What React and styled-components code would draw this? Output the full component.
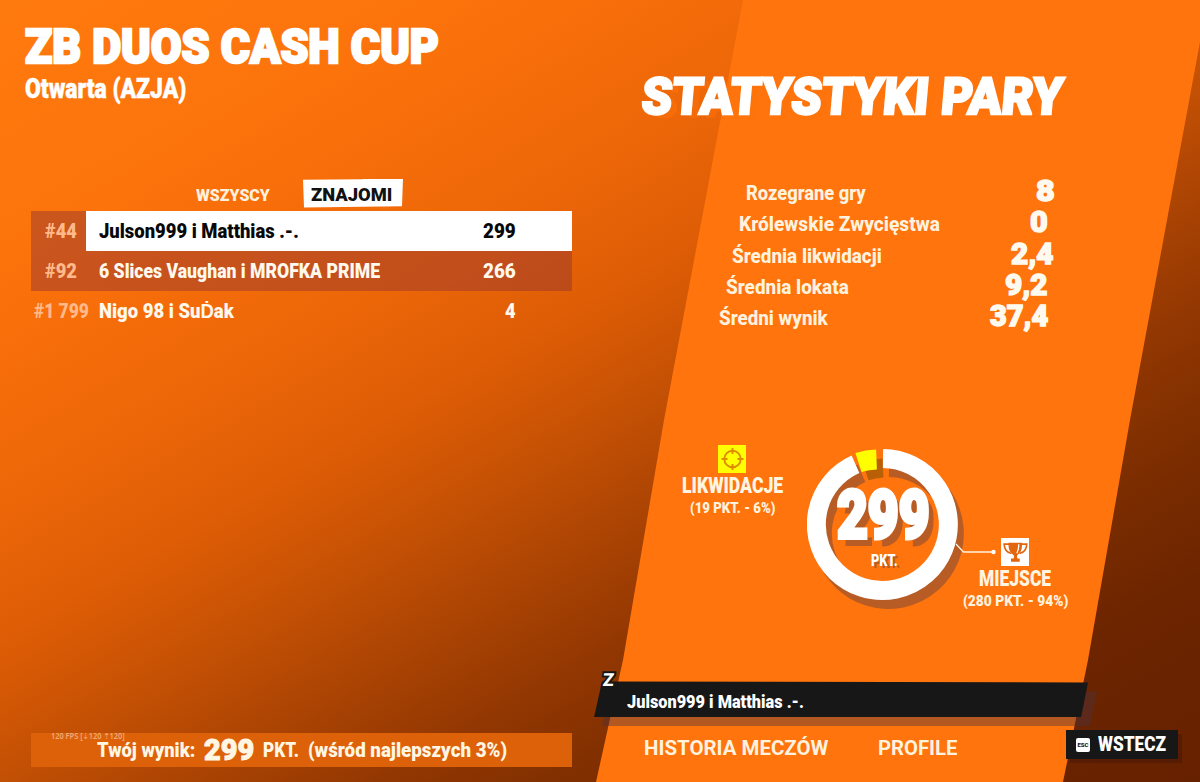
import React, { useLayoutEffect, useRef, useState } from "react";
import styled, { createGlobalStyle } from "styled-components";

const stats = [
  { label: "Rozegrane gry", value: "8", width: 120, valueWidth: 19, end: 145 },
  { label: "Królewskie Zwycięstwa", value: "0", width: 201, valueWidth: 18, end: 152 },
  { label: "Średnia likwidacji", value: "2,4", width: 150, valueWidth: 42, end: 147 },
  { label: "Średnia lokata", value: "9,2", width: 123, valueWidth: 42, end: 153 },
  { label: "Średni wynik", value: "37,4", width: 109, valueWidth: 58, end: 152 },
];

const rows = [
  { rank: "#44", rankWidth: 32, name: "Julson999 i Matthias .-.", width: 200, points: "299", pointsWidth: 33, active: true },
  { rank: "#92", rankWidth: 32, name: "6 Slices Vaughan i MROFKA PRIME", width: 281, points: "266", pointsWidth: 33, shaded: true },
  { rank: "#1 799", rankWidth: 55, name: "Nigo 98 i SuḊak", width: 135, points: "4", pointsWidth: 11 },
];

// squeezes a line of text so that it fills the given width
const Fit = ({ width, children, ...rest }) => {
  const ref = useRef(null);
  const [scale, setScale] = useState(1);

  useLayoutEffect(() => {
    setScale(width / ref.current.offsetWidth);
  }, [width, children]);

  return (
    <FitBox $width={width} {...rest}>
      <FitText ref={ref} style={{ transform: `scaleX(${scale})` }}>
        {children}
      </FitText>
    </FitBox>
  );
};

const App = () => {
  return (
    <>
      <GlobalStyle />
      <Screen>
        <Leaderboard>
          <Title width={414}>ZB DUOS CASH CUP</Title>
          <Region width={161}>Otwarta (AZJA)</Region>
          <Tabs>
            <Tab>
              <Fit width={74}>WSZYSCY</Fit>
            </Tab>
            <Tab $active>
              <Fit width={81}>ZNAJOMI</Fit>
            </Tab>
          </Tabs>
          {rows.map((row) => (
            <Row key={row.rank} $shaded={row.shaded}>
              <Rank $filled={row.active} $wide={row.rankWidth > 40}>
                <Fit width={row.rankWidth}>{row.rank}</Fit>
              </Rank>
              <Entry $active={row.active}>
                <Fit width={row.width}>{row.name}</Fit>
                <Fit width={row.pointsWidth}>{row.points}</Fit>
              </Entry>
            </Row>
          ))}
          <Score>
            <Fps width={74}>120 FPS [⇣120 ⇡120]</Fps>
            <Fit width={98}>Twój wynik:</Fit>
            <ScoreValue width={50}>299</ScoreValue>
            <Fit width={36}>PKT.</Fit>
            <Fit width={199}>(wśród najlepszych 3%)</Fit>
          </Score>
        </Leaderboard>

        <Panel>
          <PanelTitle width={421}>STATYSTYKI PARY</PanelTitle>
          <StatList>
            {stats.map((stat, i) => (
              <Stat key={stat.label} $index={i} $end={stat.end}>
                <Fit width={stat.width}>{stat.label}</Fit>
                <StatValue width={stat.valueWidth}>{stat.value}</StatValue>
              </Stat>
            ))}
          </StatList>

          <Summary>
            <Category>
              <Badge $color="#ffff00">
                <Crosshair />
              </Badge>
              <CategoryName width={101}>LIKWIDACJE</CategoryName>
              <CategoryInfo width={85}>(19 PKT. - 6%)</CategoryInfo>
            </Category>
            <Ring>
              <RingChart />
              <Total width={93}>299</Total>
              <Unit width={27}>PKT.</Unit>
            </Ring>
            <Category $low>
              <Badge $color="#fff">
                <Trophy />
              </Badge>
              <CategoryName width={72}>MIEJSCE</CategoryName>
              <CategoryInfo width={105}>(280 PKT. - 94%)</CategoryInfo>
            </Category>
          </Summary>

          <PlayerBar>
            <KeyHint>Z</KeyHint>
            <PlayerShadow />
            <PlayerShape />
            <PlayerName width={177}>Julson999 i Matthias .-.</PlayerName>
          </PlayerBar>
          <Footer>
            <Fit width={184}>HISTORIA MECZÓW</Fit>
            <Fit width={79}>PROFILE</Fit>
            <Back>
              <Esc>ESC</Esc>
              <Fit width={68}>WSTECZ</Fit>
            </Back>
          </Footer>
        </Panel>
      </Screen>
    </>
  );
};

const Crosshair = () => (
  <svg width="28" height="28" viewBox="0 0 28 28" fill="none" stroke="#e08a00" strokeWidth="1.9">
    <circle cx="14.5" cy="14" r="8.2" />
    <path d="M14.5 3v6M14.5 19v6M3.5 14h6M19.5 14h6" />
  </svg>
);

const Trophy = () => (
  <svg width="28" height="28" viewBox="0 0 28 28">
    <path
      d="M7.5 4.8h13.500v2.400c-.1 4.900-1.700 8.200-4.700 10-.5.800-.3 2.400.2 3.300h2.200v3.300H10v-3.300h2.600c.5-.9.600-2.500.1-3.300C9.600 15.400 7.600 12.100 7.500 7.200z"
      fill="#e2650f"
    />
    <path
      d="M8.300 6.100H3.100c.2 4.400 2.400 8.200 7.200 9.400M20.600 6.100h5.200c-.2 4.400-2.400 8.200-7.200 9.400"
      fill="none"
      stroke="#e2650f"
      strokeWidth="1.6"
    />
    <path d="M17.800 6.200c0 3.800-.5 6.500-1.900 9" fill="none" stroke="#fff" strokeWidth="1.3" />
  </svg>
);

const RingChart = () => (
  <RingSvg width="192" height="164" viewBox="0 0 192 164">
    <g transform="translate(6 9)" fill="none" strokeWidth="19">
      <path d="M76 13.500A66 66 0 1 1 48.500 19.200" stroke="#b85c25" />
      <path d="M52.500 17.300A66 66 0 0 1 70 14" stroke="#b85f08" />
    </g>
    <g fill="none" strokeWidth="19">
      <path d="M76 13.500A66 66 0 1 1 48.500 19.200" stroke="#fff" />
      <path d="M51.500 17.600A66 66 0 0 1 69.500 14.400" stroke="#ffff00" strokeWidth="20" />
    </g>
    <path d="M149 99l7.500 8H187" fill="none" stroke="#fff4e0" strokeWidth="1.3" />
    <circle cx="186.500" cy="107" r="2.2" fill="#fff" />
  </RingSvg>
);

export default App;

const GlobalStyle = createGlobalStyle`
  * {
    box-sizing: border-box;
  }
  body {
    margin: 0;
    background: #6b2400;
    color: #fff;
    font-family: Roboto, "Liberation Sans", sans-serif;
    font-weight: 900;
  }
`;

const FitBox = styled.div`
  flex: none;
  width: ${(props) => props.$width}px;
  white-space: nowrap;
`;
const FitText = styled.span`
  display: inline-block;
  transform-origin: left center;
`;
const Screen = styled.main`
  display: grid;
  grid-template-columns: 596px 604px;
  width: 1200px;
  height: 782px;
  overflow: hidden;
  background: linear-gradient(
    150deg,
    #ff7a0e 0%,
    #fc730c 18%,
    #f76e0a 24%,
    #ec6608 35%,
    #db5b05 45%,
    #bf4e04 54%,
    #a84203 61%,
    #923702 68%,
    #7c2d00 77%,
    #6d2500 86%,
    #662100 100%
  );
`;
const Leaderboard = styled.section`
  display: flex;
  flex-direction: column;
  padding: 20px 24px 15px 31px;
`;
const Title = styled(Fit)`
  height: 53px;
  margin-left: -6px;
  font-size: 48px;
  line-height: 53px;
  -webkit-text-stroke: 2.5px #fff;
`;
const Region = styled(Fit)`
  height: 30px;
  margin-left: -6px;
  font-size: 28px;
  line-height: 31px;
  -webkit-text-stroke: 0.5px #fff;
`;
const Tabs = styled.div`
  display: flex;
  align-items: center;
  gap: 29px;
  height: 36px;
  margin: 72px 0 0 165px;
`;
const Tab = styled.div`
  display: flex;
  align-items: center;
  justify-content: center;
  width: ${(props) => (props.$active ? 100 : 82)}px;
  height: 29px;
  padding: ${(props) => (props.$active ? "3px 3px 0 0" : "3px 0 0")};
  font-size: ${(props) => (props.$active ? 19 : 17)}px;
  line-height: 20px;
  color: ${(props) => (props.$active ? "#111" : "#fff0dd")};
  background: ${(props) => (props.$active ? "#fff" : "none")};
  margin-left: ${(props) => (props.$active ? 0 : -4)}px;
  clip-path: polygon(0 4%, 60% 3%, 61% 0, 100% 0, 99% 96%, 1% 100%);
`;
const Row = styled.div`
  display: flex;
  height: 40px;
  font-size: 20px;
  line-height: 40px;
  background: ${(props) => (props.$shaded ? "rgba(157, 58, 46, 0.53)" : "none")};
`;
const Rank = styled.div`
  display: flex;
  justify-content: flex-end;
  width: 55px;
  padding-right: ${(props) => (props.$wide ? 0 : 9)}px;
  color: #ffb98a;
  background: ${(props) => (props.$filled ? "rgba(157, 58, 46, 0.53)" : "none")};
  transform: ${(props) => (props.$wide ? "translateX(3px)" : "none")};
`;
const Entry = styled.div`
  display: flex;
  flex: 1;
  justify-content: space-between;
  padding: 0 56px 0 13px;
  color: ${(props) => (props.$active ? "#080808" : "#fff8ec")};
  background: ${(props) => (props.$active ? "#fff" : "none")};
`;
const Score = styled.div`
  position: relative;
  display: flex;
  align-items: center;
  gap: 9px;
  height: 34px;
  margin-top: auto;
  padding-left: 66px;
  font-size: 21px;
  line-height: 34px;
  color: #fff6e4;
  background: #dc6108;
`;
const ScoreValue = styled(Fit)`
  font-size: 30px;
  -webkit-text-stroke: 1px #fff6e4;
`;
const Fps = styled(Fit)`
  position: absolute;
  top: -2px;
  left: 20px;
  font: 600 8px/10px "Noto Sans", "DejaVu Sans", sans-serif;
  color: #f0ab78;
`;
const Panel = styled.section`
  position: relative;
  z-index: 0;
  display: flex;
  flex-direction: column;
  padding-top: 70px;

  &::before {
    content: "";
    position: absolute;
    inset: 0;
    z-index: -1;
    background: #ff740c;
    clip-path: polygon(147px 0, 604px 0, 604px 42px, 534px 420px, 492px 660px, 467px 782px, 0 782px, 27px 660px, 68px 420px);
  }
`;
const PanelTitle = styled(Fit)`
  height: 54px;
  margin-left: 46px;
  font-size: 51px;
  line-height: 54px;
  transform: skewX(-5deg);
  -webkit-text-stroke: 2.5px #fff;
  text-shadow: 8px 4px 0 rgba(255, 116, 12, 0.45);
`;
const StatList = styled.div`
  display: flex;
  flex-direction: column;
  margin-top: 52px;
`;
const Stat = styled.div`
  display: flex;
  justify-content: space-between;
  height: 31.3px;
  padding-left: ${(props) => 150 - props.$index * 6.8}px;
  padding-right: ${(props) => props.$end}px;
  font-size: 20px;
  font-weight: 800;
  line-height: 35px;
  color: #fff3df;
`;
const StatValue = styled(Fit)`
  font-size: 29px;
  font-weight: 900;
  line-height: 30px;
  color: #fffaf0;
  -webkit-text-stroke: 1.4px #fffaf0;
`;
const Summary = styled.div`
  display: flex;
  align-items: flex-start;
  height: 236px;
  margin-top: 113px;
  padding-left: 82px;
`;
const Category = styled.div`
  display: flex;
  flex-direction: column;
  align-items: center;
  width: 108px;
  margin-top: ${(props) => (props.$low ? 93 : 0)}px;
`;
const Badge = styled.div`
  display: flex;
  width: 28px;
  height: 28px;
  background: ${(props) => props.$color};
`;
const CategoryName = styled(Fit)`
  height: 25px;
  font-size: 22px;
  line-height: 25px;
  color: #fff5e3;
`;
const CategoryInfo = styled(Fit)`
  height: 20px;
  font-size: 15.5px;
  line-height: 21px;
  color: #fff3df;
`;
const Ring = styled.div`
  position: relative;
  display: flex;
  flex-direction: column;
  align-items: center;
  width: 175px;
  padding-top: 39px;
`;
const RingSvg = styled.svg`
  position: absolute;
  top: 0;
  left: 21px;
`;
const Total = styled(Fit)`
  position: relative;
  height: 62px;
  margin-left: 19px;
  font-size: 67px;
  line-height: 62px;
  -webkit-text-stroke: 4px #fff;
  text-shadow: 8px 8px 0 #b85c25;
`;
const Unit = styled(Fit)`
  position: relative;
  margin: 5px 0 0 22px;
  font-size: 16px;
  line-height: 20px;
  text-shadow: 3px 2px 0 #b85c25;
`;
const PlayerBar = styled.div`
  position: relative;
  display: flex;
  align-items: center;
  height: 36px;
  padding: 5px 0 0 31px;
`;
const PlayerShape = styled.div`
  position: absolute;
  inset: 0 112px 0 -2px;
  background: #171717;
  clip-path: polygon(8px 0, 100% 1px, calc(100% - 7px) 100%, 0 100%);
`;
const PlayerShadow = styled(PlayerShape)`
  inset: 9px 103px -9px 6px;
  background: rgba(75, 50, 62, 0.42);
`;
const PlayerName = styled(Fit)`
  position: relative;
  font-size: 19px;
  line-height: 34px;
`;
const KeyHint = styled.span`
  position: absolute;
  top: -12px;
  left: 7px;
  z-index: 1;
  font-size: 18px;
  line-height: 22px;
  transform: skewX(-6deg);
  paint-order: stroke fill;
  -webkit-text-stroke: 4px #171717;
`;
const Footer = styled.div`
  display: flex;
  height: 64px;
  padding-left: 48px;
  font-size: 21px;
  font-weight: 700;
  line-height: 62px;
  gap: 50px;
  color: #fff3df;
`;
const Back = styled.div`
  display: flex;
  align-items: center;
  gap: 8px;
  width: 112px;
  height: 29px;
  margin: 13px 0 0 59px;
  padding-left: 10px;
  font-weight: 900;
  line-height: 35px;
  color: #fff;
  background: #171717;
  box-shadow: 4px 4px 0 rgba(70, 22, 5, 0.5);
`;
const Esc = styled.span`
  width: 14px;
  height: 14px;
  font-size: 6px;
  line-height: 14px;
  text-align: center;
  color: #171717;
  background: #fff;
  border-radius: 2px;
`;
